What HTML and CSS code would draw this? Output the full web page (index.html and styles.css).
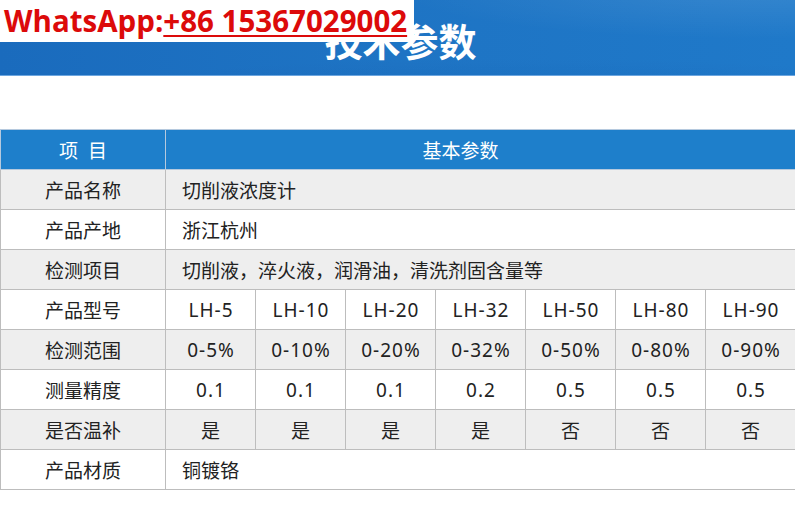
FILE: index.html
```html
<!DOCTYPE html>
<html lang="zh">
<head>
<meta charset="utf-8">
<link rel="stylesheet" href="styles.css">
</head>
<body>
<header class="banner">
  <h1 class="title">技术参数</h1>
  <div class="contact">WhatsApp:<span class="num">+86 15367029002</span></div>
</header>
<main class="content">
  <table class="spec">
    <colgroup>
      <col class="c-name">
      <col class="c-val"><col class="c-val"><col class="c-val"><col class="c-val"><col class="c-val"><col class="c-val"><col class="c-val">
    </colgroup>
    <thead>
      <tr class="head"><th>项&nbsp;&nbsp;目</th><th colspan="7" class="head-main">基本参数</th></tr>
    </thead>
    <tbody>
      <tr class="gray"><td>产品名称</td><td colspan="7" class="wide">切削液浓度计</td></tr>
      <tr><td>产品产地</td><td colspan="7" class="wide">浙江杭州</td></tr>
      <tr class="gray"><td>检测项目</td><td colspan="7" class="wide">切削液，淬火液，润滑油，清洗剂固含量等</td></tr>
      <tr class="num-row"><td>产品型号</td><td>LH-5</td><td>LH-10</td><td>LH-20</td><td>LH-32</td><td>LH-50</td><td>LH-80</td><td>LH-90</td></tr>
      <tr class="gray num-row"><td>检测范围</td><td>0-5%</td><td>0-10%</td><td>0-20%</td><td>0-32%</td><td>0-50%</td><td>0-80%</td><td>0-90%</td></tr>
      <tr class="num-row"><td>测量精度</td><td>0.1</td><td>0.1</td><td>0.1</td><td>0.2</td><td>0.5</td><td>0.5</td><td>0.5</td></tr>
      <tr class="gray"><td>是否温补</td><td>是</td><td>是</td><td>是</td><td>是</td><td>否</td><td>否</td><td>否</td></tr>
      <tr><td>产品材质</td><td colspan="7" class="wide">铜镀铬</td></tr>
    </tbody>
  </table>
</main>
</body>
</html>
```
FILE: styles.css
```css
html, body {
  margin: 0;
  padding: 0;
  background: #ffffff;
}
body {
  width: 795px;
  font-family: "Noto Sans", "Noto Sans CJK SC", sans-serif;
}
.banner {
  position: relative;
  height: 75px;
  border-bottom: 1px solid #6da6df;
  background:
    radial-gradient(ellipse 520px 70px at 760px -10px, rgba(255,255,255,0.10), rgba(255,255,255,0) 70%),
    radial-gradient(ellipse 700px 60px at 520px 100px, rgba(0,40,120,0.10), rgba(0,0,0,0) 70%),
    linear-gradient(90deg, #1a6bbd 0%, #1e74c4 50%, #1f79c9 100%);
  display: flex;
  justify-content: center;
  align-items: center;
}
.title {
  margin: 0;
  padding-top: 4px;
  padding-left: 6px;
  color: #ffffff;
  font-family: "Noto Sans CJK SC", sans-serif;
  font-weight: 700;
  font-size: 38px;
  line-height: 1;
}
.contact {
  position: absolute;
  left: 0;
  top: 0;
  width: 414px;
  height: 42px;
  box-sizing: border-box;
  padding-left: 4px;
  background: #ffffff;
  color: #dc0a0a;
  font-family: "Open Sans", sans-serif;
  font-weight: 700;
  font-size: 29.5px;
  line-height: 41px;
  white-space: nowrap;
}
.num {
  text-decoration: underline;
  text-decoration-thickness: 2px;
  text-underline-offset: 3px;
}
.content {
  padding-top: 53px;
}
.spec {
  width: 795px;
  border-collapse: collapse;
  table-layout: fixed;
  font-size: 19px;
  color: #222222;
}
.c-name { width: 165px; }
.c-val { width: 90px; }
.spec th, .spec td {
  border: 1px solid #bdbdbd;
  height: 39px;
  padding: 0;
  text-align: center;
  vertical-align: middle;
  font-weight: 400;
  white-space: nowrap;
}
.spec tr.num-row td + td {
  letter-spacing: 1px;
  text-indent: 1px;
}
.spec tr.head th {
  background: #1e7fcb;
  color: #ffffff;
  border-color: #b5c9de;
}
.spec th.head-main {
  padding-right: 40px;
}
.spec tr.gray td {
  background: #eeeeee;
}
.spec td.wide {
  text-align: left;
  padding-left: 16px;
}
```
